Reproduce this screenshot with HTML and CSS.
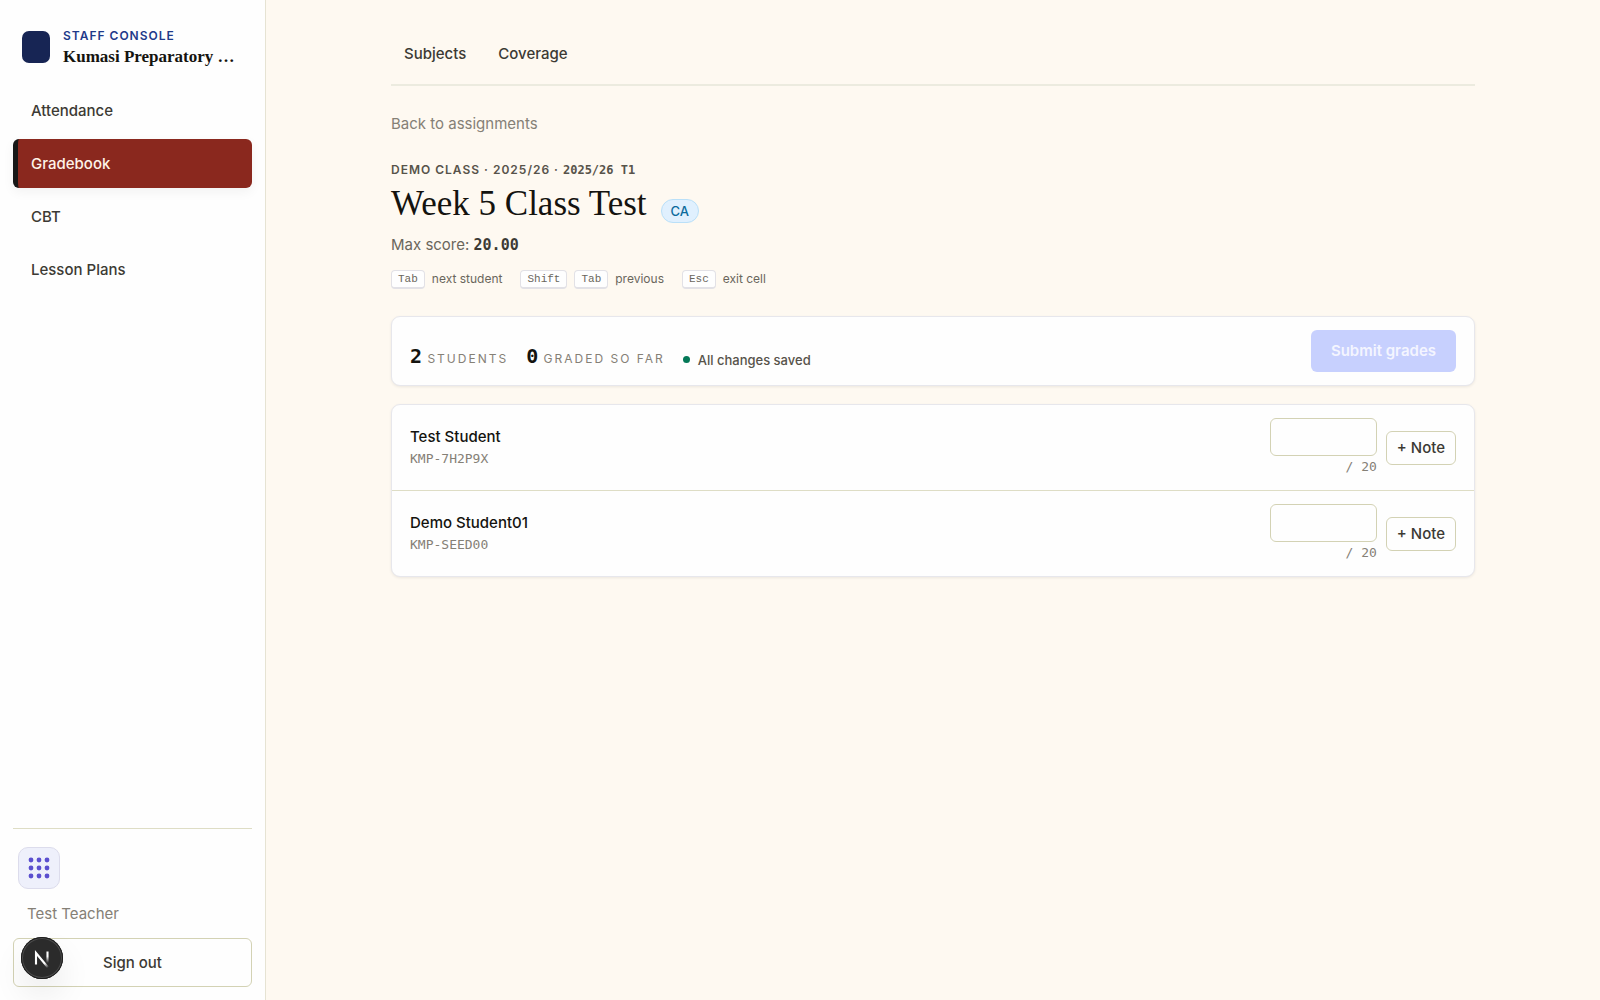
FILE: index.html
```html
<!DOCTYPE html>
<html lang="en">
<head>
    <meta charset="UTF-8">
    <meta name="viewport" content="width=device-width, initial-scale=1.0">
    <title>Week 5 Class Test - Gradebook</title>
    <link rel="stylesheet" href="styles.css">
</head>
<body>
    <aside class="sidebar">
        <div class="brand">
            <span class="brand-logo"></span>
            <div class="brand-text">
                <p class="brand-label">Staff Console</p>
                <p class="brand-name">Kumasi Preparatory …</p>
            </div>
        </div>

        <nav class="side-nav">
            <a href="#">Attendance</a>
            <a href="#" class="active" aria-current="page">Gradebook</a>
            <a href="#">CBT</a>
            <a href="#">Lesson Plans</a>
        </nav>

        <div class="side-footer">
            <button type="button" class="apps-btn" aria-label="Apps">
                <svg width="22" height="22" viewBox="0 0 22 22" fill="currentColor">
                    <circle cx="3" cy="3" r="2.4"/><circle cx="11" cy="3" r="2.4"/><circle cx="19" cy="3" r="2.4"/>
                    <circle cx="3" cy="11" r="2.4"/><circle cx="11" cy="11" r="2.4"/><circle cx="19" cy="11" r="2.4"/>
                    <circle cx="3" cy="19" r="2.4"/><circle cx="11" cy="19" r="2.4"/><circle cx="19" cy="19" r="2.4"/>
                </svg>
            </button>
            <p class="user-name">Test Teacher</p>
            <button type="button" class="sign-out">Sign out</button>
        </div>
    </aside>

    <main class="main">
        <nav class="tabs">
            <a href="#">Subjects</a>
            <a href="#">Coverage</a>
        </nav>

        <a href="#" class="back-link">Back to assignments</a>

        <header class="page-header">
            <p class="eyebrow">Demo Class · 2025/26 · <span class="mono">2025/26 T1</span></p>
            <div class="title-row">
                <h1>Week 5 Class Test</h1>
                <span class="badge">CA</span>
            </div>
            <p class="max-score">Max score: <strong class="mono">20.00</strong></p>
            <div class="shortcuts">
                <span class="shortcut"><kbd>Tab</kbd> next student</span>
                <span class="shortcut"><kbd>Shift</kbd> <kbd>Tab</kbd> previous</span>
                <span class="shortcut"><kbd>Esc</kbd> exit cell</span>
            </div>
        </header>

        <section class="card summary">
            <div class="stats">
                <span class="stat"><strong class="mono">2</strong> Students</span>
                <span class="stat"><strong class="mono">0</strong> Graded so far</span>
                <span class="save-state">All changes saved</span>
            </div>
            <button type="button" class="submit-btn" disabled>Submit grades</button>
        </section>

        <ul class="card students">
            <li class="student">
                <div class="student-info">
                    <label class="student-name" for="score-1">Test Student</label>
                    <span class="student-id">KMP-7H2P9X</span>
                </div>
                <div class="score">
                    <input type="text" id="score-1" inputmode="decimal">
                    <span class="score-max">/ 20</span>
                </div>
                <button type="button" class="note-btn">+ Note</button>
            </li>
            <li class="student">
                <div class="student-info">
                    <label class="student-name" for="score-2">Demo Student01</label>
                    <span class="student-id">KMP-SEED00</span>
                </div>
                <div class="score">
                    <input type="text" id="score-2" inputmode="decimal">
                    <span class="score-max">/ 20</span>
                </div>
                <button type="button" class="note-btn">+ Note</button>
            </li>
        </ul>
    </main>

    <button type="button" class="dev-badge" aria-label="Developer tools">
        <svg width="42" height="42" viewBox="0 0 42 42" fill="none">
            <defs>
                <linearGradient id="fade-diagonal" x1="21" y1="21" x2="28" y2="30" gradientUnits="userSpaceOnUse">
                    <stop stop-color="#fff"/>
                    <stop offset="0.5" stop-color="#fff"/>
                    <stop offset="1" stop-color="#fff" stop-opacity="0"/>
                </linearGradient>
                <linearGradient id="fade-stem" x1="26" y1="15" x2="26" y2="26" gradientUnits="userSpaceOnUse">
                    <stop stop-color="#fff"/>
                    <stop offset="0.4" stop-color="#fff"/>
                    <stop offset="1" stop-color="#fff" stop-opacity="0"/>
                </linearGradient>
            </defs>
            <path d="M15 27.5V16L27 30.5" stroke="url(#fade-diagonal)" stroke-width="2.1"/>
            <path d="M26.5 14.5V27" stroke="url(#fade-stem)" stroke-width="2.1"/>
        </svg>
    </button>
</body>
</html>
```
FILE: styles.css
```css
* {
    box-sizing: border-box;
}

body {
    margin: 0;
    min-height: 100vh;
    display: grid;
    grid-template-columns: 266px 1fr;
    font-family: Inter, "Open Sans", sans-serif;
    font-size: 15px;
    line-height: 20px;
    color: #3c3a34;
    background-color: #fef9f1;
}

p, h1, ul {
    margin: 0;
    padding: 0;
}

a {
    color: inherit;
    text-decoration: none;
}

button, input {
    font: inherit;
    color: inherit;
}

button {
    cursor: pointer;
}

.mono {
    font-family: "DejaVu Sans Mono", monospace;
}

/* Sidebar */
.sidebar {
    position: sticky;
    top: 0;
    height: 100vh;
    display: flex;
    flex-direction: column;
    padding: 26px 13px 13px;
    background-color: #fefefe;
    border-right: 1px solid #e6e3d3;
}

.brand {
    display: flex;
    align-items: center;
    gap: 13px;
    padding: 0 9px;
    margin-bottom: 18px;
}

.brand-logo {
    flex: none;
    width: 28px;
    height: 32px;
    border-radius: 7px;
    background-color: #172554;
}

.brand-label {
    font-size: 12px;
    font-weight: 600;
    letter-spacing: 1px;
    text-transform: uppercase;
    color: #1e3a8a;
}

.brand-name {
    font-family: Georgia, "Liberation Serif", serif;
    font-size: 17px;
    line-height: 22px;
    font-weight: 700;
    color: #14130f;
    white-space: nowrap;
}

.side-nav {
    display: flex;
    flex-direction: column;
    gap: 4px;
}

.side-nav a {
    padding: 14px 18px;
    border-radius: 6px;
    line-height: 21px;
    font-weight: 500;
}

.side-nav .active {
    padding-left: 13px;
    border-left: 5px solid #171717;
    color: #fef3e8;
    background-color: #8a281e;
    box-shadow: 0 4px 12px rgba(0, 0, 0, 0.05);
}

.side-footer {
    margin-top: auto;
    padding-top: 18px;
    border-top: 1px solid #deddc5;
}

.apps-btn {
    display: flex;
    align-items: center;
    justify-content: center;
    width: 42px;
    height: 42px;
    margin-left: 5px;
    padding: 0;
    border: 1px solid #dcdcec;
    border-radius: 10px;
    color: #5b4fcf;
    background-color: #eef0fb;
}

.user-name {
    padding: 15px 14px 14px;
    color: #858076;
}

.sign-out {
    width: 100%;
    height: 49px;
    border: 1px solid #d3d2b4;
    border-radius: 6px;
    font-weight: 500;
    background-color: #fefefe;
}

/* Main column */
.main {
    width: 100%;
    max-width: 1136px;
    margin: 0 auto;
    padding: 34px 26px 48px;
}

.tabs {
    display: flex;
    gap: 6px;
    padding-bottom: 10px;
    border-bottom: 2px solid #ecebdf;
}

.tabs a {
    padding: 10px 13px;
    font-weight: 500;
}

.back-link {
    display: block;
    margin: 28px 0 26px;
    color: #858076;
}

.eyebrow {
    font-size: 12px;
    font-weight: 600;
    letter-spacing: 1px;
    text-transform: uppercase;
    color: #57534a;
}

.eyebrow .mono {
    letter-spacing: 0;
}

.title-row {
    display: flex;
    align-items: flex-end;
    gap: 14px;
    margin-bottom: 7px;
}

.title-row h1 {
    font-family: Georgia, "Liberation Serif", serif;
    font-size: 35px;
    line-height: 48px;
    font-weight: 400;
    color: #14130f;
}

.badge {
    padding: 1px 9px;
    margin-bottom: 5px;
    border: 1px solid #bae0f8;
    border-radius: 12px;
    font-size: 13px;
    line-height: 20px;
    font-weight: 500;
    color: #0a6a9c;
    background-color: #e0f0fe;
}

.max-score {
    color: #6a665c;
}

.max-score strong {
    color: #3c3a34;
}

.shortcuts {
    display: flex;
    gap: 18px;
    margin: 14px 0 27px;
    font-size: 12px;
    color: #6a665c;
}

.shortcut {
    display: flex;
    align-items: center;
    gap: 7px;
}

kbd {
    padding: 0 6px;
    border: 1px solid #e2e1e6;
    border-bottom-width: 2px;
    border-radius: 4px;
    font-family: "Liberation Mono", monospace;
    font-size: 11px;
    line-height: 16px;
    background-color: #fefefe;
}

.card {
    border: 1px solid #e7e7ec;
    border-radius: 9px;
    background-color: #fefefe;
    box-shadow: 0 1px 3px rgba(0, 0, 0, 0.08);
}

.summary {
    display: flex;
    align-items: center;
    justify-content: space-between;
    padding: 13px 18px;
    margin-bottom: 18px;
}

.stats {
    display: flex;
    align-items: baseline;
    gap: 18px;
    padding-top: 14px;
}

.stat {
    font-size: 12px;
    letter-spacing: 2px;
    text-transform: uppercase;
    color: #858076;
}

.stat strong {
    font-size: 20px;
    letter-spacing: 0;
    color: #14130f;
}

.save-state {
    display: flex;
    align-items: center;
    gap: 8px;
    font-size: 13px;
    font-weight: 500;
    color: #57534a;
}

.save-state::before {
    content: "";
    width: 7px;
    height: 7px;
    border-radius: 50%;
    background-color: #047857;
}

.submit-btn {
    height: 42px;
    padding: 0 20px;
    border: none;
    border-radius: 6px;
    font-weight: 600;
    color: #f4f5ff;
    background-color: #c7d0fe;
    cursor: default;
}

/* Student rows */
.students {
    list-style: none;
}

.student {
    display: flex;
    align-items: center;
    gap: 9px;
    padding: 13px 18px;
}

.student + .student {
    border-top: 1px solid #deddc5;
}

.student-info {
    flex: 1;
    display: flex;
    flex-direction: column;
    gap: 2px;
}

.student-name {
    font-weight: 500;
    color: #14130f;
}

.student-id, .score-max {
    font-family: "DejaVu Sans Mono", monospace;
    font-size: 13px;
    color: #858076;
}

.score {
    display: flex;
    flex-direction: column;
    gap: 1px;
    width: 107px;
    text-align: right;
}

.score input {
    width: 100%;
    height: 38px;
    padding: 0 10px;
    border: 1px solid #d3d2b4;
    border-radius: 6px;
    text-align: right;
    background-color: #fefefe;
}

.note-btn {
    height: 34px;
    padding: 0 10px;
    border: 1px solid #d3d2b4;
    border-radius: 6px;
    font-weight: 500;
    background-color: #fefefe;
}

/* Floating button over the bottom left corner */
.dev-badge {
    position: fixed;
    left: 21px;
    bottom: 21px;
    width: 42px;
    height: 42px;
    padding: 0;
    border: none;
    border-radius: 50%;
    background-color: #2b2b2b;
    box-shadow: inset 0 0 0 1px #1c1c1c, inset 0 0 0 2px #4a4a4a, 0 16px 32px rgba(0, 0, 0, 0.08);
}
```
